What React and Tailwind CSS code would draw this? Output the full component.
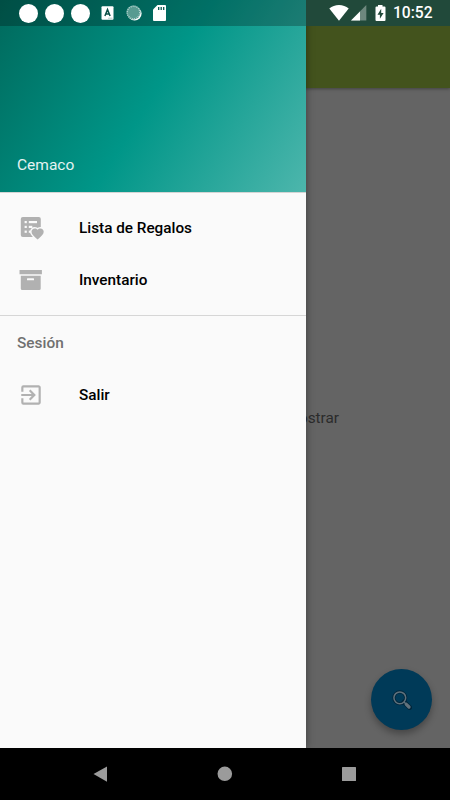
import React from 'react';
import { MdExitToApp } from 'react-icons/md';

const ListHeartIcon = () => (
  <svg width="26" height="26" viewBox="0 0 26 26" fill="#b1b1b1">
    <rect x="2.800" y="2" width="20" height="20" rx="2" />
    <g fill="#fafafa">
      <rect x="6.600" y="6" width="2.200" height="2.200" />
      <rect x="6.600" y="10.800" width="2.200" height="2.200" />
      <rect x="6.600" y="15.600" width="2.200" height="2.200" />
      <rect x="10.800" y="6" width="8.200" height="2.200" />
      <rect x="10.800" y="10.800" width="3.500" height="2.200" />
      <rect x="10.800" y="15.600" width="2" height="2.200" />
    </g>
    <path
      d="M19.600 24.600l-.9-.8c-3.200-2.800-5.200-4.700-5.200-7 0-1.900 1.400-3.300 3.300-3.300 1.100 0 2.100.5 2.800 1.300.7-.8 1.700-1.300 2.800-1.300 1.900 0 3.300 1.400 3.300 3.300 0 2.300-2 4.200-5.200 7z"
      stroke="#fafafa"
      strokeWidth="3"
      paintOrder="stroke"
    />
  </svg>
);

const ArchiveIcon = () => (
  <svg width="26" height="26" viewBox="0 0 26 26" fill="#b1b1b1">
    <path d="M1.500 3h22.400v4.300H1.500zM2.800 8.700h19.900V21.500a1.500 1.500 0 0 1-1.500 1.500H4.300a1.500 1.500 0 0 1-1.500-1.500zM9.600 11.200a.6.600 0 0 0-.6.600v1.500h7v-1.500a.6.600 0 0 0-.6-.6z" fillRule="evenodd" />
  </svg>
);

const menuItems = [
  { name: 'Lista de Regalos', icon: ListHeartIcon },
  { name: 'Inventario', icon: ArchiveIcon },
];

const MenuItem = ({ name, icon: Icon }) => (
  <div className="flex h-[52px] items-center pl-[18px]">
    <Icon size={26} color="#b1b1b1" />
    <span className="ml-[35px] pt-px text-[15.3px] font-medium text-black">{name}</span>
  </div>
);

const StatusBar = () => (
  <div className="absolute inset-x-0 top-0 z-20 flex h-[26px] items-center text-white">
    <div className="flex h-full w-[306px] items-center bg-black/25">
      <div className="ml-[19px] flex gap-[7px]">
        <span className="size-[19px] rounded-full bg-white" />
        <span className="size-[19px] rounded-full bg-white" />
        <span className="size-[19px] rounded-full bg-white" />
      </div>
      <svg className="ml-[11px]" width="13" height="14" viewBox="0 0 13 14">
        <rect x="0.500" y="0.200" width="12" height="13.600" rx="1" fill="#fff" />
        <path d="M3.900 10L6.500 3.600 9.100 10M4.900 8h3.200" fill="none" stroke="#0a4f47" strokeWidth="1.500" />
        <path d="M7 12.200h4.500" stroke="#b5ccc9" strokeWidth="1" />
      </svg>
      <svg className="ml-[12px]" width="16" height="16" viewBox="0 0 16 16">
        <circle cx="8.600" cy="8.600" r="7" fill="#fff" />
        <circle cx="7.500" cy="7.500" r="7" fill="#579b91" />
        <circle cx="7.500" cy="7.500" r="6.300" fill="none" stroke="#b4d5d0" strokeWidth="1.400" strokeDasharray="1 1" />
      </svg>
      <svg className="ml-[11px]" width="13" height="16" viewBox="0 0 13 16">
        <path d="M4.500 0H12a1 1 0 0 1 1 1v14a1 1 0 0 1-1 1H1a1 1 0 0 1-1-1V4.500z" fill="#fff" />
        <path d="M5.700 2v3M8.200 2v3M10.700 2v3" stroke="#07594f" strokeWidth="1.300" />
      </svg>
    </div>
    <div className="flex h-full w-[144px] items-center bg-[#21493a]">
      <svg className="ml-[23px]" width="20" height="16" viewBox="0 0 20 16">
        <path d="M10 15.800L.3 3.600C3 1.300 6.300 0 10 0s7 1.300 9.700 3.600z" fill="#fff" />
      </svg>
      <svg className="ml-[2px]" width="16" height="16" viewBox="0 0 16 16">
        <path d="M15.300 0v15.500H0z" fill="#fff" opacity=".35" />
        <path d="M9 6.400v9.100H0z" fill="#fff" />
      </svg>
      <svg className="ml-[8px]" width="11" height="16" viewBox="0 0 11 16">
        <path d="M3 0h4.500v1.600H9.500a1 1 0 0 1 1 1V15a1 1 0 0 1-1 1h-8a1 1 0 0 1-1-1V2.600a1 1 0 0 1 1-1H3z" fill="#fff" />
        <path d="M6.200 3.800L2.500 9.700h2.400v4.100L8.600 8H6.200z" fill="#21493a" />
      </svg>
      <span className="ml-[7px] pt-[2px] text-[15.6px] font-medium leading-none">10:52</span>
    </div>
  </div>
);

const Drawer = () => (
  <aside className="absolute left-0 top-0 z-10 h-[748px] w-[306px] bg-[#fafafa] shadow-[0_0_8px_rgba(0,0,0,0.4)]">
    <div className="flex h-[192px] items-end bg-[linear-gradient(122.1deg,#00695c,#009688_50%,#4db6ac)] pb-[15px] pl-[17px]">
      <span className="text-[15.5px] leading-6 text-white/90">Cemaco</span>
    </div>
    <nav className="border-t border-black/15 pt-[9px]">
      {menuItems.map((item) => (
        <MenuItem key={item.name} {...item} />
      ))}
      <div className="mt-[9px] flex h-[54px] items-center border-t border-[#d6d6d6] pl-[17px] pt-[2px] text-[15.4px] font-medium text-[#707070]">
        Sesión
      </div>
      <MenuItem name="Salir" icon={MdExitToApp} />
    </nav>
  </aside>
);

const App = () => (
  <div className="relative flex h-[800px] w-[450px] flex-col overflow-hidden bg-[#646464] font-[Roboto,sans-serif]">
    <StatusBar />
    <Drawer />

    <header className="h-[88px] shrink-0 bg-[#43531d] shadow-[0_1px_3px_rgba(0,0,0,0.35)]" />
    <main className="flex h-[660px] shrink-0 items-center justify-end pr-[111px] text-[15.300px] text-[#2b2b2b]">
      No hay información para mostrar
    </main>

    {/* Floating search button */}
    <button className="absolute left-[371px] top-[669px] flex size-[61px] items-center justify-center rounded-full bg-[#003a58] shadow-[0_4px_7px_rgba(0,0,0,0.3)]">
      <svg width="20" height="20" viewBox="0 0 20 20" fill="none">
        <circle cx="7.800" cy="7.800" r="5.900" stroke="#00263b" strokeWidth="3.200" />
        <path d="M12 12l5.600 5.600" stroke="#00263b" strokeWidth="5" strokeLinecap="round" />
        <circle cx="7.800" cy="7.800" r="5.900" stroke="#60717c" strokeWidth="1.500" />
        <path d="M12 12l2 2" stroke="#60717c" strokeWidth="1.500" />
        <path d="M14.300 14.300l2.700 2.700" stroke="#60717c" strokeWidth="3.300" strokeLinecap="round" />
      </svg>
    </button>

    <footer className="z-10 h-[52px] shrink-0 bg-black">
      <svg width="450" height="52" viewBox="0 0 450 52" fill="#9b9b9b">
        <path d="M107 18.500v15.200L93.500 26z" />
        <circle cx="224.800" cy="25.800" r="7.300" />
        <rect x="342" y="19" width="14" height="14" rx=".5" />
      </svg>
    </footer>
  </div>
);

export default App;
